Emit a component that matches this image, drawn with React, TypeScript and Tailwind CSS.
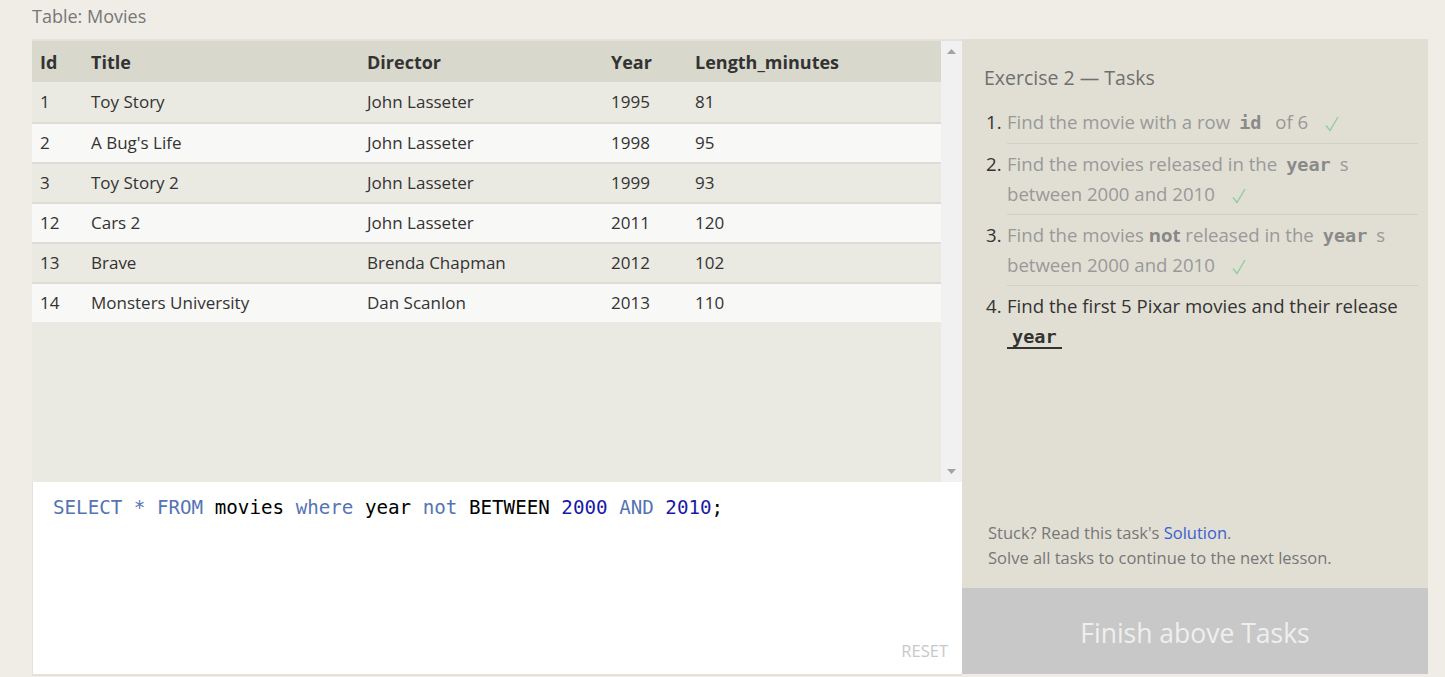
import React from "react";

const rows = [
  { id: 1, title: "Toy Story", director: "John Lasseter", year: 1995, length: 81 },
  { id: 2, title: "A Bug's Life", director: "John Lasseter", year: 1998, length: 95 },
  { id: 3, title: "Toy Story 2", director: "John Lasseter", year: 1999, length: 93 },
  { id: 12, title: "Cars 2", director: "John Lasseter", year: 2011, length: 120 },
  { id: 13, title: "Brave", director: "Brenda Chapman", year: 2012, length: 102 },
  { id: 14, title: "Monsters University", director: "Dan Scanlon", year: 2013, length: 110 },
];

const cols = "grid grid-cols-[51px_276px_244px_84px_1fr]";

const Check = () => (
  <svg className="ml-[17px] inline-block align-middle" width="14" height="16" viewBox="0 0 14 16">
    <path d="M1 9.5 L5 14.5 L13 1" fill="none" stroke="#8fcf9c" strokeWidth="1.4" />
  </svg>
);

const Code = ({ children }: { children: React.ReactNode }) => (
  <code className="mx-[9px] font-['DejaVu_Sans_Mono',monospace] text-[18.5px] leading-none font-bold text-[#8a8a8a]">
    {children}
  </code>
);

const Task = ({
  n,
  done,
  last,
  first,
  children,
}: {
  n: number;
  done?: boolean;
  last?: boolean;
  first?: boolean;
  children: React.ReactNode;
}) => (
  <li className="flex">
    <span className={`w-[23px] shrink-0 pl-[2px] text-[#333] ${first ? "pt-[6px]" : "pt-[5px]"}`}>
      {n}.
    </span>
    <div
      className={`flex-1 ${first ? "pb-[6px] pt-[6px]" : "py-[5px]"} ${
        done ? "text-[#999]" : "text-[#333]"
      } ${last ? "" : "border-b border-[#d2d0c5]"}`}
    >
      {children}
    </div>
  </li>
);

export default function App() {
  return (
    <div className="min-h-screen bg-[#efede6] pl-8 pr-[17px] font-['Open_Sans',sans-serif]">
      <div className="flex h-[39px] items-start pt-[3px] text-[18px] text-[#777]">
        Table: Movies
      </div>

      <div className="flex items-start">
        {/* left column */}
        <div className="flex w-[930px] flex-col">
          <div className="flex h-[443px] border-t-2 border-[#e3e2dc]">
            <div className="flex-1 bg-[#eae9e2] text-[17px] text-[#333]">
              <div className={`${cols} h-[41px] items-center bg-[#d9d8cc] pt-[2px] text-[18px] font-bold`}>
                <div className="pl-2">Id</div>
                <div className="pl-2">Title</div>
                <div className="pl-2">Director</div>
                <div className="pl-2">Year</div>
                <div className="pl-2">Length_minutes</div>
              </div>
              {rows.map((r, i) => (
                <div
                  key={r.id}
                  className={`${cols} h-[40px] items-center ${
                    i % 2 ? "bg-[#f8f8f7]" : "bg-[#eae9e2]"
                  } ${i > 0 ? "border-t-2 border-[#dedcd6]" : ""}`}
                >
                  <div className="pl-2">{r.id}</div>
                  <div className="pl-2">{r.title}</div>
                  <div className="pl-2">{r.director}</div>
                  <div className="pl-2">{r.year}</div>
                  <div className="pl-2">{r.length}</div>
                </div>
              ))}
            </div>
            <div className="flex w-[21px] flex-col items-center justify-between bg-[#f1f1f1] py-[8px]">
              <svg width="9" height="5" viewBox="0 0 9 5">
                <path d="M4.5 0 L9 5 L0 5 Z" fill="#a3a3a3" />
              </svg>
              <svg width="9" height="5" viewBox="0 0 9 5">
                <path d="M0 0 L9 0 L4.5 5 Z" fill="#a3a3a3" />
              </svg>
            </div>
          </div>

          <div className="relative h-[194px] border-b-2 border-l border-[#e4e2d6] bg-white pl-[20px] pt-[12px]">
            <div className="font-['DejaVu_Sans_Mono',monospace] text-[19.2px] text-black">
              <span className="text-[#5574b3]">SELECT * FROM</span> movies{" "}
              <span className="text-[#5574b3]">where</span> year{" "}
              <span className="text-[#5574b3]">not</span> BETWEEN{" "}
              <span className="text-[#1a1aa6]">2000</span>{" "}
              <span className="text-[#5574b3]">AND</span>{" "}
              <span className="text-[#1a1aa6]">2010</span>;
            </div>
            <div className="absolute bottom-[10px] right-[14px] text-[16.5px] text-[#c8c8c8]">
              RESET
            </div>
          </div>
        </div>

        {/* right column */}
        <div className="flex h-[635px] w-[466px] flex-col bg-[#e1dfd4]">
          <div className="flex flex-1 flex-col pl-[22px] pr-[10px] pt-[24px]">
            <h2 className="text-[19.5px] text-[#6f6f6f]">Exercise 2 — Tasks</h2>
            <ol className="mt-[9px] text-[18.6px] leading-[30px]">
              <Task n={1} done first>
                Find the movie with a row<Code>id</Code> of 6<Check />
              </Task>
              <Task n={2} done>
                Find the movies released in the<Code>year</Code>s between 2000 and 2010
                <Check />
              </Task>
              <Task n={3} done>
                Find the movies <b className="text-[#888]">not</b> released in the
                <Code>year</Code>s between 2000 and 2010<Check />
              </Task>
              <Task n={4} last>
                Find the first 5 Pixar movies and their release{" "}
                <code className="border-b-2 border-[#333] px-[5px] font-['DejaVu_Sans_Mono',monospace] text-[18.5px] leading-none font-bold text-[#333]">
                  year
                </code>
              </Task>
            </ol>
            <div className="mt-auto pb-[18px] pl-[4px] text-[16.5px] leading-[25px] text-[#777]">
              <div>
                Stuck? Read this task's <span className="text-[#3b5dd4]">Solution</span>.
              </div>
              <div>Solve all tasks to continue to the next lesson.</div>
            </div>
          </div>
          <div className="flex h-[86px] items-center justify-center bg-[#c8c8c8] pt-[5px] text-[26.5px] text-[#efefef]">
            Finish above Tasks
          </div>
        </div>
      </div>
    </div>
  );
}
